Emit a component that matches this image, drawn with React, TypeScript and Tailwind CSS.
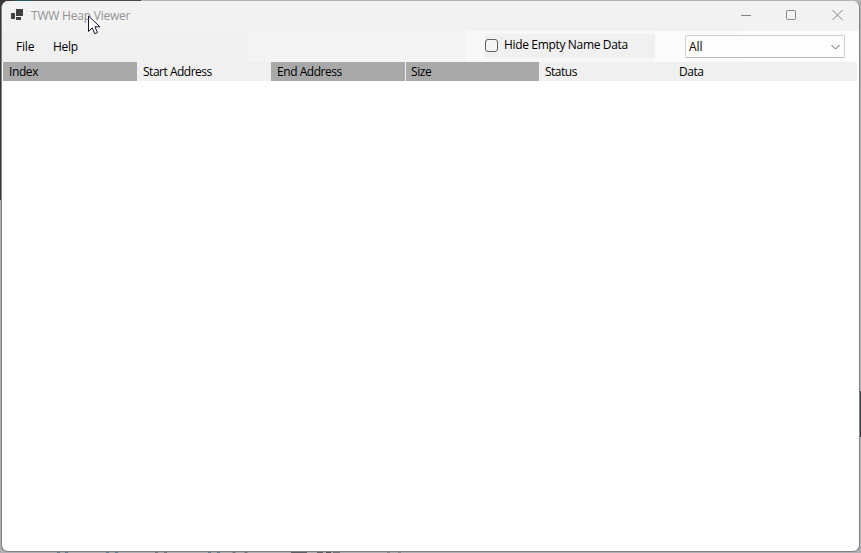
import React from 'react';

const columns = [
  { name: 'Index', cell: 'w-[134px] bg-[#a9a9a9]', text: 'tracking-[-0.4px]' },
  { name: 'Start Address', cell: 'w-[134px] bg-[#f0f0f0]', text: 'tracking-[-0.49px]' },
  { name: 'End Address', cell: 'w-[135px] border-r border-[#f0f0f0] bg-[#a9a9a9]', text: 'tracking-[-0.45px]' },
  { name: 'Size', cell: 'w-[133px] bg-[#a9a9a9] -indent-px', text: 'tracking-[-0.4px]' },
  { name: 'Status', cell: 'w-[134px] bg-[#f0f0f0]', text: 'tracking-[-0.5px]' },
  { name: 'Data', cell: 'w-[184px] bg-[#f0f0f0]', text: 'tracking-[-0.5px]' },
];

function Backdrop() {
  return (
    <div className="absolute inset-0 bg-[#b0b0b2]">
      <div className="absolute left-0 top-0 h-[200px] w-[3px] bg-[#38383c]" />
      <div className="absolute left-0 top-0 h-[8px] w-[10px] bg-[#38383c]" />
      <div className="absolute left-0 top-0 flex h-px w-full bg-[#b5b5b5]">
        <div className="w-[14px] bg-[#38383c]" />
        <div className="w-[18px] bg-[#295568]" />
        <div className="w-[109px] bg-[#48484b]" />
      </div>
      <div className="absolute right-0 top-[391px] h-[46px] w-[2px] bg-[#34373b]" />
      <div className="absolute bottom-0 left-[57px] flex h-px opacity-80">
        <div className="w-[11px] border-x-[3px] border-dotted border-[#4f7089]" />
        <div className="ml-[38px] w-[12px] border-x-[3px] border-dotted border-[#4f7089]" />
        <div className="ml-[37px] w-[12px] border-x-[3px] border-dotted border-[#66686e]" />
        <div className="ml-[41px] w-[12px] border-x-[3px] border-dotted border-[#4f7089]" />
        <div className="ml-[12px] w-[16px] border-x-[4px] border-dotted border-[#55565c]" />
        <div className="ml-[43px] w-[16px] bg-[#4c4d52]" />
        <div className="ml-[10px] w-[6px] bg-[#4c4d52]" />
        <div className="ml-[3px] w-[5px] bg-[#3c3d42]" />
        <div className="ml-[2px] w-[7px] bg-[#66686e]" />
        <div className="ml-[47px] w-[14px] border-x-[3px] border-dotted border-[#7d8087]" />
      </div>
    </div>
  );
}

function TitleBar() {
  return (
    <header className="flex h-[30px] shrink-0 items-start bg-[#f2f2f2]">
      <svg className="ml-[9px] mt-[8px] h-[12px] w-[13px]" viewBox="0 0 13 12" shapeRendering="crispEdges">
        <path fill="#404040" d="M5 0h7v7H5zM0 4h4v6H0zM5 8h5v3H5z" />
      </svg>
      <span className="ml-[7px] mt-[7px] whitespace-nowrap text-[12px] leading-4 tracking-[-0.21px] text-[#929292]">TWW Heap Viewer</span>
      <svg className="ml-auto mr-[14px] mt-[8px] h-[12px] w-[104px]" viewBox="0 0 104 12" fill="none" stroke="#858585">
        <path d="M0 6.5h10" />
        <rect x="45.5" y="1.5" width="9" height="9" rx="1" />
        <path d="M91.5 1l10 10M101.5 1l-10 10" />
      </svg>
    </header>
  );
}

function MenuBar() {
  return (
    <nav className="flex h-[31px] shrink-0 items-start bg-[linear-gradient(to_right,#f0f0f0_0px,#f0f0f0_191px,#f1f1f1_191px,#f1f1f1_246px,#f4f4f4_246px,#f4f4f4_464px,#f8f8f8_464px,#f8f8f8_653px,#fbfbfb_653px,#fbfbfb_738px,#fdfdfd_738px)]">
      <span className="ml-[14px] mt-[8px] w-[37px] leading-4 tracking-[-0.2px]">File</span>
      <span className="mt-[8px] leading-4 tracking-[-0.3px]">Help</span>
      <label className="ml-auto mt-[3px] flex h-[24px] w-[170px] items-start bg-[#f0f0f0]">
        <span className="mt-[5px] h-[13px] w-[13px] shrink-0 rounded-[3px] border border-[#626262] bg-[#f5f5f5]" />
        <span className="ml-[6px] mt-[3px] whitespace-nowrap leading-4 tracking-[-0.34px]">Hide Empty Name Data</span>
      </label>
      <div className="ml-[30px] mr-[14px] mt-[4px] flex h-[23px] w-[160px] items-center justify-between rounded-[2px] border border-[#d0d0d0] border-b-[#b8b8b8] bg-[#fdfdfd] pl-[3px] pr-1">
        <span className="leading-4">All</span>
        <svg className="h-[6px] w-[9px]" viewBox="0 0 9 6" fill="none" stroke="#5c5c5c">
          <path d="M.5 1l4 4 4-4" />
        </svg>
      </div>
    </nav>
  );
}

export default function App() {
  return (
    <div className="relative h-[553px] w-[861px] overflow-hidden font-['Open_Sans','Noto_Sans',sans-serif] text-[12px] text-black">
      <Backdrop />
      <main className="absolute left-px top-px flex h-[551px] w-[859px] flex-col overflow-hidden rounded-[7px] border-x border-b border-[#7f8187] bg-white">
        <TitleBar />
        <MenuBar />
        <div className="flex h-[19px] shrink-0 pl-px">
          {columns.map((c) => (
            <div key={c.name} className={`${c.cell} shrink-0 whitespace-nowrap pl-[6px] leading-[19px]`}>
              <span className={c.text}>{c.name}</span>
            </div>
          ))}
        </div>
      </main>
      <svg className="absolute left-[88px] top-[15px] h-[20px] w-[13px]" viewBox="0 0 13 20">
        <path d="M.5 1v15.5l3.7-3.6 2.6 5.8 2.7-1.2-2.6-5.7h5z" fill="#fff" stroke="#17172b" strokeLinejoin="round" />
      </svg>
    </div>
  );
}
